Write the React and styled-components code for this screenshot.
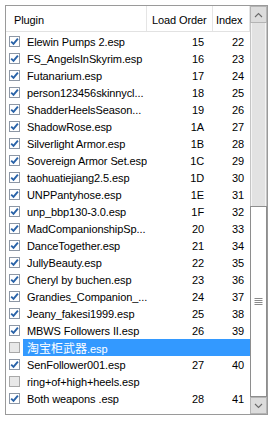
import React from "react";
import styled, { createGlobalStyle } from "styled-components";

const Global = createGlobalStyle`
  html, body { margin: 0; padding: 0; background: #ffffff; }
  body {
    font-family: "Liberation Sans", Arial, "Noto Sans CJK SC", sans-serif;
    font-size: 11px;
    letter-spacing: -0.1px;
    color: #000;
  }
`;

const Page = styled.div`
  padding: 5px 0 0 5px;
  width: 274px;
  height: 421px;
  box-sizing: border-box;
`;

const Frame = styled.div`
  width: 263px;
  height: 410px;
  box-sizing: border-box;
  border: 1px solid #9a9a9a;
  display: flex;
  background: #fff;
`;

const ListArea = styled.div`
  flex: 1;
  display: flex;
  flex-direction: column;
  min-width: 0;
`;

const Header = styled.div`
  display: flex;
  height: 26px;
  box-sizing: border-box;
  border-bottom: 1px solid #e2e2e2;
  margin-bottom: 1px;
`;

const HeaderCell = styled.div`
  width: ${(p) => (p.$w ? `${p.$w}px` : "auto")};
  flex: ${(p) => (p.$w ? "none" : "1")};
  box-sizing: border-box;
  border-right: 1px solid #e5e5e5;
  padding-left: ${(p) => p.$pad}px;
  padding-top: 3px;
  display: flex;
  align-items: center;
  white-space: nowrap;
`;

const Row = styled.div`
  display: flex;
  height: 17px;
  align-items: stretch;
`;

const CheckCol = styled.div`
  width: 17px;
  flex: none;
  display: flex;
  align-items: center;
`;

const Box = styled.div`
  width: 11px;
  height: 11px;
  box-sizing: border-box;
  margin-left: 3px;
  border: 1px solid ${(p) => (p.$checked ? "#8d97a5" : "#a8a8a8")};
  background: ${(p) => (p.$checked ? "#ffffff" : "#e8e8e8")};
  display: flex;
  align-items: center;
  justify-content: center;
`;

const RowBody = styled.div`
  flex: 1;
  display: flex;
  align-items: center;
  background: ${(p) => (p.$selected ? "#3399ff" : "transparent")};
  color: ${(p) => (p.$selected ? "#ffffff" : "#000000")};
  white-space: nowrap;
`;

const NameCell = styled.div`
  width: 124px;
  flex: none;
  box-sizing: border-box;
  padding-left: 4px;
  overflow: hidden;
`;

const Cjk = styled.span`
  font-family: "Noto Sans CJK SC", sans-serif;
  font-size: 12px;
  letter-spacing: 0;
`;

const NumCell = styled.div`
  width: ${(p) => (p.$w ? `${p.$w}px` : "auto")};
  flex: ${(p) => (p.$w ? "none" : "1")};
  box-sizing: border-box;
  text-align: right;
  padding-right: ${(p) => p.$pad}px;
`;

const ScrollBar = styled.div`
  width: 17px;
  flex: none;
  display: flex;
  flex-direction: column;
`;

const ArrowButton = styled.div`
  height: 17px;
  flex: none;
  box-sizing: border-box;
  background: #dcdcdc;
  border: 1px solid #b4b4b4;
  display: flex;
  align-items: center;
  justify-content: center;
`;

const Track = styled.div`
  flex: 1;
  background: #e2e2e2;
  border-left: 1px solid #c4c4c4;
  border-right: 1px solid #c4c4c4;
  box-shadow: inset 1px 0 0 #f4f4f4, inset -1px 0 0 #f4f4f4;
`;

const Thumb = styled.div`
  height: 191px;
  flex: none;
  box-sizing: border-box;
  background: #ffffff;
  border: 1px solid #8e8e8e;
  display: flex;
  align-items: center;
  justify-content: center;
`;

const Chevron = ({ up }) => (
  <svg width="9" height="6" viewBox="0 0 9 6">
    <path
      d={up ? "M1 5 L4.5 1.5 L8 5" : "M1 1 L4.5 4.5 L8 1"}
      fill="none"
      stroke="#6a6a6a"
      strokeWidth="1.1"
    />
  </svg>
);

const Grip = () => (
  <svg width="9" height="8" viewBox="0 0 9 8">
    {[0.5, 2.5, 4.5, 6.5].map((y) => (
      <line key={y} x1="0.5" x2="8.5" y1={y} y2={y} stroke="#8a8a8a" strokeWidth="1" />
    ))}
  </svg>
);

const Check = () => (
  <svg width="9" height="9" viewBox="0 0 9 9">
    <path d="M1.2 4.6 L3.5 6.9 L7.9 1.6" fill="none" stroke="#2a63a8" strokeWidth="1.9" />
  </svg>
);

const rows = [
  ["Elewin Pumps 2.esp", "15", "22", true],
  ["FS_AngelsInSkyrim.esp", "16", "23", true],
  ["Futanarium.esp", "17", "24", true],
  ["person123456skinnycl...", "18", "25", true],
  ["ShadderHeelsSeason...", "19", "26", true],
  ["ShadowRose.esp", "1A", "27", true],
  ["Silverlight Armor.esp", "1B", "28", true],
  ["Sovereign Armor Set.esp", "1C", "29", true],
  ["taohuatiejiang2.5.esp", "1D", "30", true],
  ["UNPPantyhose.esp", "1E", "31", true],
  ["unp_bbp130-3.0.esp", "1F", "32", true],
  ["MadCompanionshipSp...", "20", "33", true],
  ["DanceTogether.esp", "21", "34", true],
  ["JullyBeauty.esp", "22", "35", true],
  ["Cheryl by buchen.esp", "23", "36", true],
  ["Grandies_Companion_...", "24", "37", true],
  ["Jeany_fakesi1999.esp", "25", "38", true],
  ["MBWS Followers II.esp", "26", "39", true],
  ["淘宝柜武器|.esp", "", "", false, true],
  ["SenFollower001.esp", "27", "40", true],
  ["ring+of+high+heels.esp", "", "", false],
  ["Both weapons .esp", "28", "41", true],
];

const renderName = (name) => {
  if (name.includes("|")) {
    const [cjk, rest] = name.split("|");
    return (
      <>
        <Cjk>{cjk}</Cjk>
        {rest}
      </>
    );
  }
  return name;
};

export default function App() {
  return (
    <>
      <Global />
      <Page>
        <Frame>
          <ListArea>
            <Header>
              <HeaderCell $w={141} $pad={8}>Plugin</HeaderCell>
              <HeaderCell $w={66} $pad={5}>Load Order</HeaderCell>
              <HeaderCell $pad={3}>Index</HeaderCell>
            </Header>
            {rows.map(([name, lo, idx, checked, selected]) => (
              <Row key={name}>
                <CheckCol>
                  <Box $checked={checked}>{checked && <Check />}</Box>
                </CheckCol>
                <RowBody $selected={selected}>
                  <NameCell>{renderName(name)}</NameCell>
                  <NumCell $w={66} $pad={9}>{lo}</NumCell>
                  <NumCell $pad={6}>{idx}</NumCell>
                </RowBody>
              </Row>
            ))}
          </ListArea>
          <ScrollBar>
            <ArrowButton>
              <Chevron up />
            </ArrowButton>
            <Track />
            <Thumb>
              <Grip />
            </Thumb>
            <ArrowButton>
              <Chevron />
            </ArrowButton>
          </ScrollBar>
        </Frame>
      </Page>
    </>
  );
}
